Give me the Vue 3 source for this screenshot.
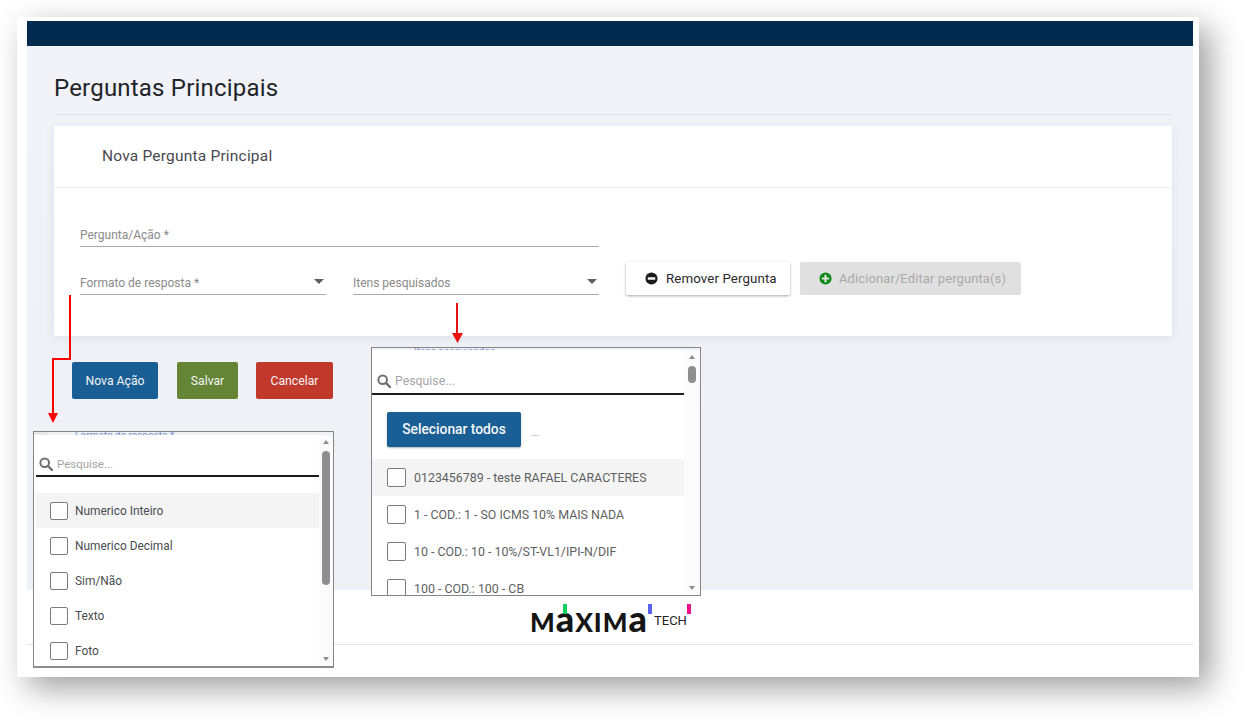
<script setup>
const typeOptions = ['Numerico Inteiro', 'Numerico Decimal', 'Sim/Não', 'Texto', 'Foto']
const itemOptions = [
  '0123456789 - teste RAFAEL CARACTERES',
  '1 - COD.: 1 - SO ICMS 10% MAIS NADA',
  '10 - COD.: 10 - 10%/ST-VL1/IPI-N/DIF',
  '100 - COD.: 100 - CB'
]
</script>

<template>
  <div class="shot">
    <div class="frame">
      <header class="topbar"></header>
      <main class="page">
        <h1 class="title">Perguntas Principais</h1>
        <section class="card">
          <div class="card-head">Nova Pergunta Principal</div>
          <div class="card-body">
            <div class="field wide"><span>Pergunta/Ação *</span></div>
            <div class="row">
              <div class="field half"><span>Formato de resposta *</span><i class="caret"></i></div>
              <div class="field half"><span>Itens pesquisados</span><i class="caret"></i></div>
              <button class="btn-white">
                <svg class="ic" viewBox="0 0 14 14"><circle cx="7" cy="7" r="6.5" fill="#1c1c1c"/><rect x="3" y="5.7" width="8" height="2.6" fill="#fff"/></svg>
                Remover Pergunta
              </button>
              <button class="btn-disabled">
                <svg class="ic" viewBox="0 0 14 14"><circle cx="7" cy="7" r="6.5" fill="#0a8a14"/><path d="M3 5.8h2.8V3h2.4v2.8H11v2.4H8.200V11H5.800V8.200H3z" fill="#e0e0e0"/></svg>
                Adicionar/Editar pergunta(s)
              </button>
            </div>
          </div>
        </section>
        <div class="actions">
          <button class="act blue">Nova Ação</button>
          <button class="act green">Salvar</button>
          <button class="act red">Cancelar</button>
        </div>
      </main>
      <footer class="foot">
        <div class="logo">
          <span class="word">M<span class="low">a</span>XIM<span class="low">a</span></span><span class="tech">TECH</span>
          <i class="tick t1"></i><i class="tick t2"></i><i class="tick t3"></i>
        </div>
      </footer>
    </div>

    <div class="popup p1">
      <div class="strip"><span>Formato de resposta *</span></div>
      <div class="pop-body">
        <div class="pop-main">
          <div class="search">
            <svg class="mag" viewBox="0 0 14 14"><circle cx="5.700" cy="5.700" r="4.300" fill="none" stroke="#6f6f6f" stroke-width="2"/><path d="M9 9l4 4" stroke="#6f6f6f" stroke-width="2.400" stroke-linecap="round"/></svg>
            <span>Pesquise...</span>
          </div>
          <ul class="list">
            <li v-for="(o, i) in typeOptions" :key="o" class="opt" :class="{ hl: i === 0 }"><i class="box"></i><span>{{ o }}</span></li>
          </ul>
        </div>
        <div class="sbar">
          <i class="up"></i>
          <i class="thumb"></i>
          <i class="down"></i>
        </div>
      </div>
    </div>

    <div class="popup p2">
      <div class="strip"><span>Itens pesquisados</span></div>
      <div class="pop-body">
        <div class="pop-main">
          <div class="search">
            <svg class="mag" viewBox="0 0 14 14"><circle cx="5.700" cy="5.700" r="4.300" fill="none" stroke="#6f6f6f" stroke-width="2"/><path d="M9 9l4 4" stroke="#6f6f6f" stroke-width="2.400" stroke-linecap="round"/></svg>
            <span>Pesquise...</span>
          </div>
          <div class="sel-row"><button class="sel-all">Selecionar todos</button><span class="dots">...</span></div>
          <ul class="list">
            <li v-for="(o, i) in itemOptions" :key="o" class="opt" :class="{ hl: i === 0 }"><i class="box"></i><span>{{ o }}</span></li>
          </ul>
        </div>
        <div class="sbar">
          <i class="up"></i>
          <i class="thumb"></i>
          <i class="down"></i>
        </div>
      </div>
    </div>

    <svg class="arrows" width="1247" height="725" viewBox="0 0 1247 725">
      <path d="M70 295V359H53V414" fill="none" stroke="#f00" stroke-width="2"/>
      <path d="M48 413h10l-5 10z" fill="#f00"/>
      <path d="M457 303V335" fill="none" stroke="#e81010" stroke-width="2"/>
      <path d="M452 333h11l-5.500 10z" fill="#e81010"/>
    </svg>
  </div>
</template>

<style>
html, body { margin: 0; background: #fff; }
</style>

<style scoped>
.shot {
  position: relative;
  width: 1247px;
  height: 725px;
  overflow: hidden;
  font-family: Roboto, "Noto Sans", sans-serif;
  background: #fff;
}
.frame {
  position: relative;
  box-sizing: border-box;
  width: 1182px;
  height: 660px;
  margin: 17px 0 0 17px;
  padding: 4px 6px 0 10px;
  background: #fff;
  box-shadow: 11px 11px 30px rgba(0, 0, 0, 0.38);
}
.topbar { height: 25px; background: #022b50; }
.page {
  box-sizing: border-box;
  height: 544px;
  padding: 27px 21px 0 27px;
  background: linear-gradient(#f2f3f8, #eef0f6);
}
.title {
  margin: 0;
  height: 41px;
  font-size: 24px;
  line-height: 30px;
  font-weight: 400;
  color: #212529;
  letter-spacing: .2px;
  border-bottom: 1px solid #dfe0e6;
}
.card {
  margin-top: 11px;
  height: 210px;
  background: #fff;
  box-shadow: 0 2px 10px rgba(70, 80, 130, 0.1);
}
.card-head {
  box-sizing: border-box;
  height: 62px;
  padding: 0 48px;
  line-height: 61px;
  font-size: 15.500px;
  font-weight: 400;
  color: #48494f;
  letter-spacing: .2px;
  border-bottom: 1px solid #f0f1f5;
}
.card-body { padding: 29px 26px 0; }
.field {
  position: relative;
  box-sizing: border-box;
  height: 30px;
  padding-top: 11px;
  font-size: 12px;
  line-height: 14px;
  color: #8a8a8a;
  border-bottom: 1px solid #a8a8a8;
}
.wide { width: 519px; }
.half { width: 246px; }
.row { display: flex; align-items: flex-end; margin-top: 15px; }
.half + .half { margin-left: 27px; }
.caret {
  position: absolute;
  right: 2px;
  top: 14px;
  border: 5.500px solid transparent;
  border-top: 5.500px solid #5f5f5f;
  border-bottom: 0;
}
button {
  border: 0;
  font-family: inherit;
  padding: 0;
}
.btn-white, .btn-disabled {
  display: flex;
  align-items: center;
  gap: 7px;
  height: 33px;
  font-size: 13px;
  border-radius: 2px;
  box-sizing: border-box;
  letter-spacing: .1px;
}
.btn-white {
  width: 164px;
  margin-left: 27px;
  padding-left: 19px;
  gap: 8px;
  font-size: 13.300px;
  background: #fff;
  color: #2a2a2a;
  box-shadow: 0 1px 3px rgba(0, 0, 0, .35);
}
.btn-disabled {
  width: 221px;
  margin-left: 10px;
  padding-left: 19px;
  background: #e0e0e0;
  color: #a9a9a9;
}
.ic { width: 13px; height: 13px; flex: none; }
.actions { display: flex; margin: 26px 0 0 18px; }
.act {
  height: 37px;
  color: #f4f4f4;
  font-size: 12.200px;
  border-radius: 2px;
}
.blue { width: 86px; background: #195f96; }
.green { width: 61px; margin-left: 19px; background: #648535; }
.red { width: 77px; margin-left: 18px; background: #c1392b; }
.foot { height: 54px; border-bottom: 1px solid #e1e0ec; display: flex; justify-content: center; }
.logo {
  position: relative;
  display: flex;
  align-items: flex-start;
  height: 32px;
  margin-top: 14px;
  width: 160px;
}
.word {
  font-family: Lato, sans-serif;
  font-weight: 900;
  font-size: 26px;
  line-height: 30px;
  margin-top: 1px;
  color: #151515;
  letter-spacing: 1px;
  white-space: nowrap;
}
.low { font-size: 36px; line-height: 26px; }
.tech {
  position: absolute;
  left: 124px;
  top: 10px;
  font-size: 13px;
  line-height: 14px;
  font-weight: 400;
  color: #222;
}
.tick { position: absolute; top: 0; width: 4px; height: 10px; }
.t1 { left: 33px; background: #0fd060; }
.t2 { left: 118px; background: #5a62f0; }
.t3 { left: 157px; background: #f0108c; }

.popup {
  position: absolute;
  box-sizing: border-box;
  border: 1px solid #858585;
  overflow: hidden;
  display: flex;
  flex-direction: column;
}
.p1 { left: 33px; top: 431px; width: 301px; height: 237px; border-bottom: 2px solid #8d8d8d; }
.p2 { left: 371px; top: 347px; width: 330px; height: 249px; }
.strip {
  flex: none;
  overflow: hidden;
  color: #7d97d2;
  font-size: 10px;
}
.p1 .strip {
  height: 3px;
  padding-left: 41px;
  line-height: 8px;
  background: linear-gradient(90deg, #e6e7ec 15px, transparent 15px);
}
.p2 .strip { height: 2px; padding-left: 42px; line-height: 7px; }
.strip span { display: block; }
.pop-body { flex: 1; min-height: 0; display: flex; background: #fff; }
.pop-main { flex: 1; min-width: 0; overflow: hidden; }
.search {
  display: flex;
  align-items: center;
  box-sizing: border-box;
  border-bottom: 2px solid #1c1c1c;
  color: #a5a5a5;
}
.p1 .search { height: 42px; margin-left: 2px; padding: 17px 0 0 3px; gap: 4px; font-size: 11.500px; }
.p2 .search { height: 45px; padding: 18px 0 0 5px; gap: 4px; font-size: 12.300px; }
.mag { width: 14px; height: 14px; flex: none; }
.p1 .list { margin: 16px 0 0 2px; }
.p2 .list { margin: 12px 0 0; }
.list { padding: 0; list-style: none; }
.opt {
  display: flex;
  align-items: center;
  box-sizing: border-box;
}
.p1 .opt { height: 35px; padding-left: 14px; gap: 7px; font-size: 11.900px; color: #4a4d50; }
.p2 .opt { height: 37px; padding-left: 15px; gap: 8px; font-size: 12.400px; color: #5f5f5f; }
.hl { background: #f4f4f4; }
.box {
  flex: none;
  box-sizing: border-box;
  width: 18px;
  height: 18px;
  background: #fff;
  border: 1.500px solid #7b7b7b;
  border-radius: 2px;
}
.p2 .box { width: 19px; height: 19px; }
.sel-row { display: flex; align-items: center; margin: 17px 0 0 15px; }
.sel-all {
  width: 134px;
  height: 35px;
  background: #195f96;
  color: #f6f6f6;
  font-size: 13.800px;
  font-weight: 500;
  padding-bottom: 1px;
  border-radius: 2px;
  box-shadow: 0 1px 2px rgba(0, 0, 0, .3);
}
.dots { margin: 6px 0 0 10px; font-size: 10px; color: #999; }
.sbar {
  position: relative;
  flex: none;
  background: #fbfbfb;
}
.p1 .sbar { width: 14px; }
.p2 .sbar { width: 16px; }
.sbar i { position: absolute; display: block; }
.up, .down { left: 50%; margin-left: -3.500px; border: 3.500px solid transparent; }
.up { border-top: 0; border-bottom: 4px solid #8d8d8d; top: 5px; }
.down { border-bottom: 0; border-top: 4px solid #8d8d8d; bottom: 5px; }
.thumb { left: 50%; margin-left: -4px; width: 8px; background: #8e8e8e; border-radius: 4px; }
.p1 .thumb { top: 16px; height: 134px; }
.p2 .thumb { top: 16px; height: 17px; }
.arrows { position: absolute; left: 0; top: 0; pointer-events: none; }
</style>
